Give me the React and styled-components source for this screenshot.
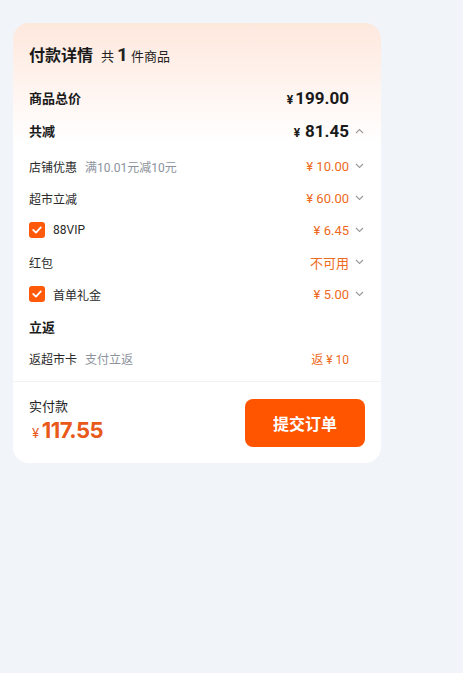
import styled, { createGlobalStyle } from "styled-components";

const Global = createGlobalStyle`
  html, body {
    margin: 0;
    background: #f1f4f8;
  }
  body {
    font-family: Roboto, "Noto Sans CJK SC", sans-serif;
    color: #1f1f1f;
  }
`;

function Chevron({ up }) {
  return (
    <svg width="9" height="6" viewBox="0 0 9 6">
      <polyline
        points={up ? "1,5 4.5,1.5 8,5" : "1,1 4.5,4.5 8,1"}
        fill="none"
        stroke="#9a9a9a"
        strokeWidth="1.1"
      />
    </svg>
  );
}

function Check() {
  return (
    <Box>
      <svg width="10" height="8" viewBox="0 0 10 8">
        <polyline
          points="1.2,4 4,6.6 8.8,1.4"
          fill="none"
          stroke="#fff"
          strokeWidth="1.8"
          strokeLinecap="round"
          strokeLinejoin="round"
        />
      </svg>
    </Box>
  );
}

const details = [
  { label: "店铺优惠", sub: "满10.01元减10元", value: "¥ 10.00" },
  { label: "超市立减", value: "¥ 60.00" },
  { label: "88VIP", check: true, value: "¥ 6.45" },
  { label: "红包", value: "不可用" },
  { label: "首单礼金", check: true, value: "¥ 5.00" },
];

function App() {
  return (
    <Page>
      <Global />
      <Card>
        <Title>
          付款详情
          <Count>
            共<b>1</b>件商品
          </Count>
        </Title>

        <Row $h={33}>
          <Strong>商品总价</Strong>
          <Right>
            <Big>
              <small>¥</small>199.00
            </Big>
            <Slot />
          </Right>
        </Row>
        <Row $h={33}>
          <Strong>共减</Strong>
          <Right>
            <Big>
              <small>¥ </small>81.45
            </Big>
            <Slot>
              <Chevron up />
            </Slot>
          </Right>
        </Row>

        <List>
          {details.map((d) => (
            <Row key={d.label}>
              <Label>
                {d.check && <Check />}
                {d.label}
                {d.sub && <Sub>{d.sub}</Sub>}
              </Label>
              <Right>
                <Amount>{d.value}</Amount>
                <Slot>
                  <Chevron />
                </Slot>
              </Right>
            </Row>
          ))}
          <Row>
            <Strong>立返</Strong>
          </Row>
          <Row>
            <Label>
              返超市卡<Sub>支付立返</Sub>
            </Label>
            <Right>
              <Amount $small>返 ¥ 10</Amount>
              <Slot />
            </Right>
          </Row>
        </List>

        <Footer>
          <Total>
            <span>实付款</span>
            <Price>
              <small>¥</small>117.55
            </Price>
          </Total>
          <Submit>提交订单</Submit>
        </Footer>
      </Card>
    </Page>
  );
}

export default App;

const Page = styled.div`
  padding: 23px 13px;
`;

const Card = styled.div`
  width: 368px;
  box-sizing: border-box;
  border-radius: 16px;
  background: linear-gradient(180deg, #fde8dd 0px, #fff3ee 60px, #ffffff 120px);
  padding: 20px 16px 0;
`;

const Title = styled.div`
  display: flex;
  align-items: baseline;
  font-size: 16px;
  font-weight: 700;
  line-height: 24px;
  color: #1a1a1a;
  margin-bottom: 12px;
`;

const Count = styled.span`
  margin-left: 8px;
  font-size: 13px;
  font-weight: 400;
  color: #222;

  & > b {
    font-size: 19px;
    font-weight: 700;
    margin: 0 3px;
  }
`;

const Row = styled.div`
  height: ${(p) => p.$h || 32}px;
  display: flex;
  align-items: center;
  justify-content: space-between;
`;

const Strong = styled.span`
  font-size: 13px;
  font-weight: 700;
  color: #1a1a1a;
`;

const Label = styled.span`
  display: flex;
  align-items: center;
  font-size: 12px;
  color: #2a2a2a;
`;

const Sub = styled.span`
  margin-left: 8px;
  color: #8c929c;
`;

const Box = styled.span`
  width: 16px;
  height: 16px;
  border-radius: 3px;
  background: #ff5a0a;
  display: inline-flex;
  align-items: center;
  justify-content: center;
  margin-right: 8px;
`;

const Right = styled.div`
  display: flex;
  align-items: center;
  gap: 4px;
`;

const Slot = styled.span`
  width: 12px;
  display: flex;
  justify-content: center;
`;

const Big = styled.span`
  font-size: 17px;
  font-weight: 700;
  color: #1a1a1a;

  & > small {
    font-size: 12px;
    margin-right: 2px;
  }
`;

const Amount = styled.span`
  font-size: ${(p) => (p.$small ? 12 : 13)}px;
  color: #ee6a22;
`;

const List = styled.div`
  margin-top: 3px;
  padding-bottom: 7px;
`;

const Footer = styled.div`
  margin: 0 -16px;
  padding: 16px;
  border-top: 1px solid #f0f1f3;
  display: flex;
  align-items: center;
  justify-content: space-between;
`;

const Total = styled.div`
  display: flex;
  flex-direction: column;
  font-size: 13px;
  color: #222;
  line-height: 18px;
`;

const Price = styled.span`
  font-family: Inter, Roboto, sans-serif;
  font-size: 22px;
  font-weight: 700;
  line-height: 28px;
  letter-spacing: -0.5px;
  color: #e8591a;

  & > small {
    font-size: 13px;
    font-weight: 400;
    margin: 0 3px 0 3px;
  }
`;

const Submit = styled.button`
  width: 120px;
  height: 48px;
  border: none;
  border-radius: 8px;
  background: #ff5500;
  color: #fff;
  font-family: inherit;
  font-size: 16px;
  font-weight: 700;
  cursor: pointer;
`;
